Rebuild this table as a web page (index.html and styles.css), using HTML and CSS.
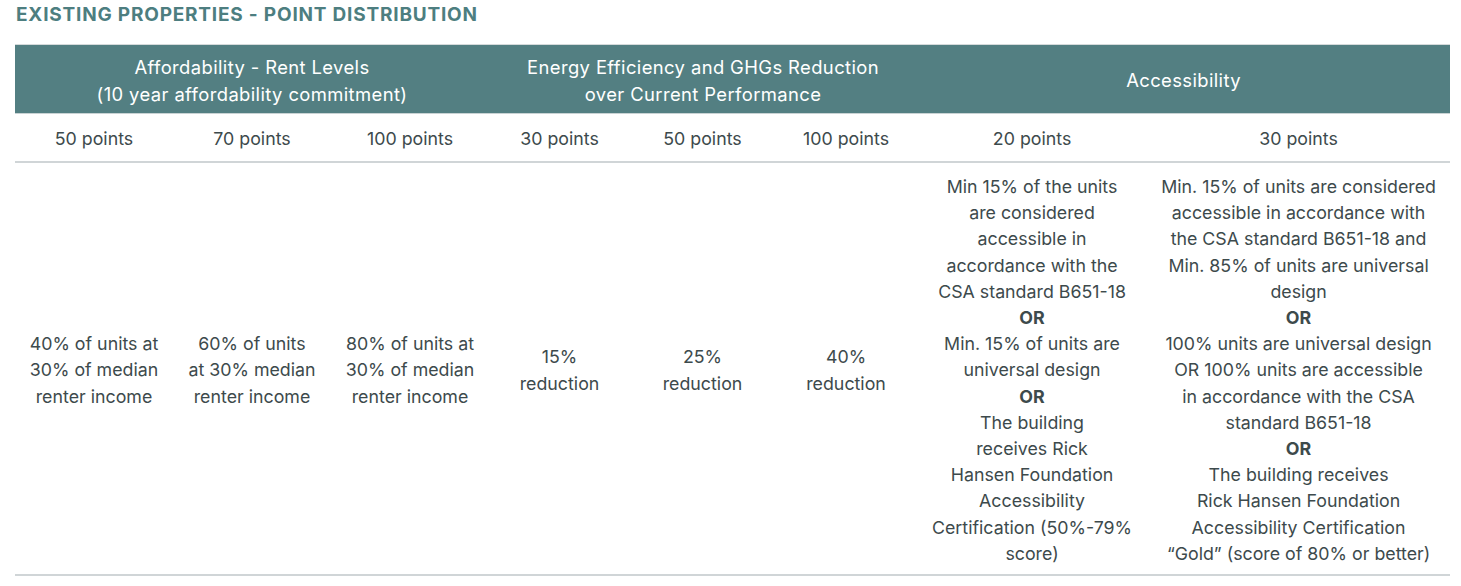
FILE: index.html
```html
<!DOCTYPE html>
<html>
<head>
<meta charset="utf-8">
<link rel="stylesheet" href="styles.css">
</head>
<body>
<div class="page">
  <h1 class="title">EXISTING PROPERTIES - POINT DISTRIBUTION</h1>
  <table class="dist">
    <colgroup>
      <col class="c1"><col class="c2"><col class="c3"><col class="c4"><col class="c5"><col class="c6"><col class="c7"><col class="c8">
    </colgroup>
    <thead>
      <tr class="group">
        <th colspan="3">Affordability - Rent Levels<br>(10 year affordability commitment)</th>
        <th colspan="3">Energy Efficiency and GHGs Reduction<br>over Current Performance</th>
        <th colspan="2">Accessibility</th>
      </tr>
      <tr class="points">
        <td>50 points</td><td>70 points</td><td>100 points</td>
        <td>30 points</td><td>50 points</td><td>100 points</td>
        <td>20 points</td><td>30 points</td>
      </tr>
    </thead>
    <tbody>
      <tr class="body">
        <td>40% of units at<br>30% of median<br>renter income</td>
        <td>60% of units<br>at 30% median<br>renter income</td>
        <td>80% of units at<br>30% of median<br>renter income</td>
        <td>15%<br>reduction</td>
        <td>25%<br>reduction</td>
        <td>40%<br>reduction</td>
        <td>Min 15% of the units<br>are considered<br>accessible in<br>accordance with the<br>CSA standard B651-18<br><b>OR</b><br>Min. 15% of units are<br>universal design<br><b>OR</b><br>The building<br>receives Rick<br>Hansen Foundation<br>Accessibility<br>Certification (50%-79%<br>score)</td>
        <td>Min. 15% of units are considered<br>accessible in accordance with<br>the CSA standard B651-18 and<br>Min. 85% of units are universal<br>design<br><b>OR</b><br>100% units are universal design<br>OR 100% units are accessible<br>in accordance with the CSA<br>standard B651-18<br><b>OR</b><br>The building receives<br>Rick Hansen Foundation<br>Accessibility Certification<br>“Gold” (score of 80% or better)</td>
      </tr>
    </tbody>
  </table>
</div>
</body>
</html>
```

FILE: styles.css
```css
html, body {
  margin: 0;
  padding: 0;
  background: #ffffff;
}
.page {
  padding: 4px 11px 0 15px;
  font-family: Inter, "Open Sans", Arial, sans-serif;
  color: #3d4a4c;
}
.title {
  margin: 0 0 19px 1px;
  font-size: 19px;
  line-height: 21px;
  font-weight: 700;
  color: #4d7e80;
  letter-spacing: 0.8px;
}
.dist {
  width: 1435px;
  border-collapse: collapse;
  table-layout: fixed;
  font-size: 17.8px;
  line-height: 26.2px;
}
.c1, .c2, .c3 { width: 158px; }
.c4 { width: 141px; }
.c5 { width: 145px; }
.c6 { width: 142px; }
.c7 { width: 230px; }
.c8 { width: 303px; }
.dist th, .dist td {
  padding: 0;
  text-align: center;
  vertical-align: middle;
  font-weight: 400;
  white-space: nowrap;
}
.group th {
  background: #537f82;
  color: #ffffff;
  height: 65px;
  font-size: 18.4px;
  letter-spacing: 0.4px;
  border-top: 1px solid #d5dadb;
  border-bottom: 1px solid #c9d3d4;
  padding-top: 3px;
}
.points td {
  height: 43px;
  padding-top: 4px;
  border-bottom: 2px solid #d0d5d7;
}
.body td {
  height: 407px;
  padding-top: 4px;
  border-bottom: 2px solid #d0d5d7;
}
.body b {
  font-weight: 700;
}
```
